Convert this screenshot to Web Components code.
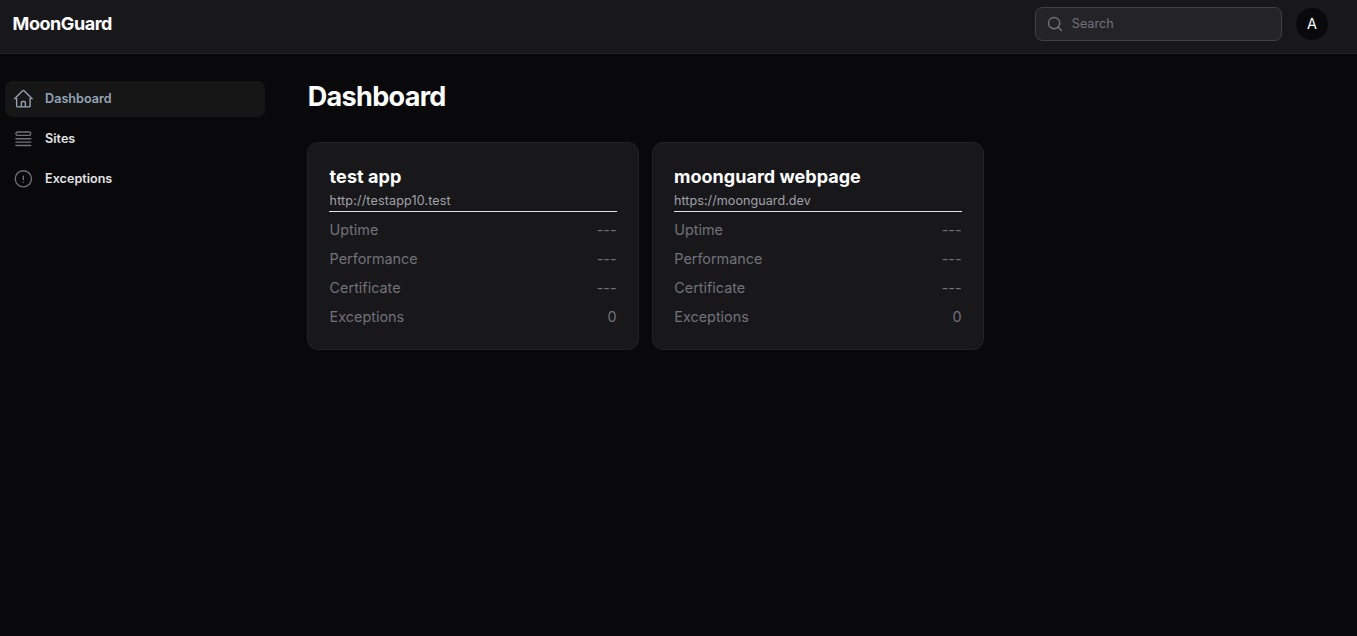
<!DOCTYPE html>
<html lang="en">
<head>
<meta charset="utf-8">
<title>Dashboard - MoonGuard</title>
<style>
html, body { height: 100%; }
body { margin: 0; background: #09090b; color: #fff; font-family: Inter, "Liberation Sans", sans-serif; overflow: hidden; }
</style>
</head>
<body>
<mg-app></mg-app>
<script>
const ICONS = {
  home: 'm2.25 12 8.954-8.955c.44-.439 1.152-.439 1.591 0L21.75 12M4.5 9.75v10.125c0 .621.504 1.125 1.125 1.125H9.75v-4.875c0-.621.504-1.125 1.125-1.125h2.25c.621 0 1.125.504 1.125 1.125V21h4.125c.621 0 1.125-.504 1.125-1.125V9.75M8.25 21h8.25',
  queue: 'M3.75 12h16.5m-16.5 3.75h16.5M3.75 19.5h16.5M5.625 4.5h12.75a1.875 1.875 0 0 1 0 3.75H5.625a1.875 1.875 0 0 1 0-3.75Z',
  exclamation: 'M12 9v3.75m9-.75a9 9 0 1 1-18 0 9 9 0 0 1 18 0Zm-9 3.75h.008v.008H12v-.008Z'
};
class Base extends HTMLElement {
  connectedCallback() {
    if (!this.shadowRoot) this.attachShadow({ mode: 'open' }).innerHTML = this.render();
  }
}
customElements.define('mg-icon', class extends Base {
  render() {
    return `<style>:host{display:block;width:21.6px;height:21.6px;flex:none}svg{display:block;width:100%;height:100%;overflow:visible}</style>
    <svg viewBox="0 0 24 24" fill="none" stroke="currentColor" stroke-width="1.5" stroke-linecap="round" stroke-linejoin="round"><g transform="translate(-.5 0)"><path d="${ICONS[this.getAttribute('name')]}"/></g></svg>`;
  }
});
customElements.define('mg-search', class extends Base {
  render() {
    return `<style>
    :host{display:flex;align-items:center;box-sizing:border-box;width:247px;height:34px;padding:0 10px;gap:7.8px;border:1px solid #414144;border-radius:7.2px;background:#242427;color:#71717a;font-size:12.6px;line-height:18px}
    svg{display:block;width:18px;height:18px;flex:none}
    </style>
    <svg viewBox="0 0 20 20" fill="currentColor"><path fill-rule="evenodd" clip-rule="evenodd" d="M9 3.5a5.5 5.5 0 1 0 0 11 5.5 5.5 0 0 0 0-11ZM2 9a7 7 0 1 1 12.452 4.391l3.328 3.329a.75.75 0 1 1-1.06 1.06l-3.329-3.328A7 7 0 0 1 2 9Z"/></svg>
    <span><slot></slot></span>`;
  }
});
customElements.define('mg-avatar', class extends Base {
  render() {
    return `<style>:host{display:flex;align-items:center;justify-content:center;width:32px;height:32px;border-radius:50%;background:#09090b;color:#fff;font-size:14.4px;line-height:32px}</style><slot></slot>`;
  }
});
customElements.define('mg-topbar', class extends Base {
  render() {
    return `<style>
    :host{display:flex;box-sizing:border-box;height:54px;padding:0 29px 6px 12.6px;align-items:center;background:#18181b;border-bottom:1px solid #232326}
    .brand{font-size:18px;font-weight:700;line-height:18px;letter-spacing:-.45px;margin-right:auto}
    .end{display:flex;align-items:center;gap:14px;padding-top:1px}
    </style>
    <div class="brand">MoonGuard</div>
    <div class="end"><mg-search>Search</mg-search><mg-avatar>A</mg-avatar></div>`;
  }
});
customElements.define('mg-nav-item', class extends Base {
  render() {
    return `<style>
    :host{display:flex;align-items:center;box-sizing:border-box;height:36px;padding:0 7.7px;gap:10.8px;border-radius:7.2px;color:#e4e4e7;font-size:12.6px;font-weight:600;line-height:18px}
    mg-icon{color:#71717a}
    :host([active]){background:#161616;color:#94a3b8}
    :host([active]) mg-icon{color:#94a3b8}
    </style><mg-icon name="${this.getAttribute('icon')}"></mg-icon><span><slot></slot></span>`;
  }
});
customElements.define('mg-sidebar', class extends Base {
  render() {
    return `<style>:host{display:flex;flex-direction:column;gap:4px;box-sizing:border-box;width:270px;padding:27px 5px;flex:none}</style>
    <mg-nav-item icon="home" active>Dashboard</mg-nav-item>
    <mg-nav-item icon="queue">Sites</mg-nav-item>
    <mg-nav-item icon="exclamation">Exceptions</mg-nav-item>`;
  }
});
customElements.define('mg-stat', class extends Base {
  render() {
    return `<style>:host{display:flex;justify-content:space-between;padding:0 .5px 0 var(--inset,.3px);color:#71717a;font-size:14.4px;line-height:21.6px}</style>
    <span><slot></slot></span><span>${this.getAttribute('value')}</span>`;
  }
});
customElements.define('mg-site-card', class extends Base {
  render() {
    return `<style>
    :host{display:block;box-sizing:border-box;width:332px;height:208px;padding:21px 21px 0;border:1px solid #232326;border-radius:10.8px;background:#18181b}
    h2{margin:0;padding-left:var(--inset,0);font-size:18px;font-weight:700;line-height:25px;letter-spacing:var(--name-track,.02px)}
    .url{font-size:12.6px;line-height:18px;color:#a1a1aa;padding:3px 0 1px var(--inset,0);border-bottom:1px solid #e4e4e7;letter-spacing:var(--url-track,.04px)}
    .stats{display:flex;flex-direction:column;gap:7.4px;padding-top:7.4px}
    </style>
    <h2>${this.getAttribute('name')}</h2>
    <div class="url">${this.getAttribute('url')}</div>
    <div class="stats"><slot></slot></div>`;
  }
});
customElements.define('mg-app', class extends Base {
  render() {
    const stats = '<mg-stat value="---">Uptime</mg-stat><mg-stat value="---">Performance</mg-stat><mg-stat value="---">Certificate</mg-stat><mg-stat value="0">Exceptions</mg-stat>';
    return `<style>
    :host{display:block}
    .body{display:flex}
    main{padding:27px 0 0 37px}
    h1{margin:0;padding-left:.8px;font-size:27px;font-weight:700;line-height:32.4px;letter-spacing:-.675px}
    .cards{display:flex;gap:13px;padding-top:28.6px}
    mg-site-card:first-child{--inset:.6px;--name-track:.08px;--url-track:.13px}
    </style>
    <mg-topbar></mg-topbar>
    <div class="body"><mg-sidebar></mg-sidebar>
    <main><h1>Dashboard</h1>
    <div class="cards">
      <mg-site-card name="test app" url="http://testapp10.test">${stats}</mg-site-card>
      <mg-site-card name="moonguard webpage" url="https://moonguard.dev">${stats}</mg-site-card>
    </div></main></div>`;
  }
});
</script>
</body>
</html>
